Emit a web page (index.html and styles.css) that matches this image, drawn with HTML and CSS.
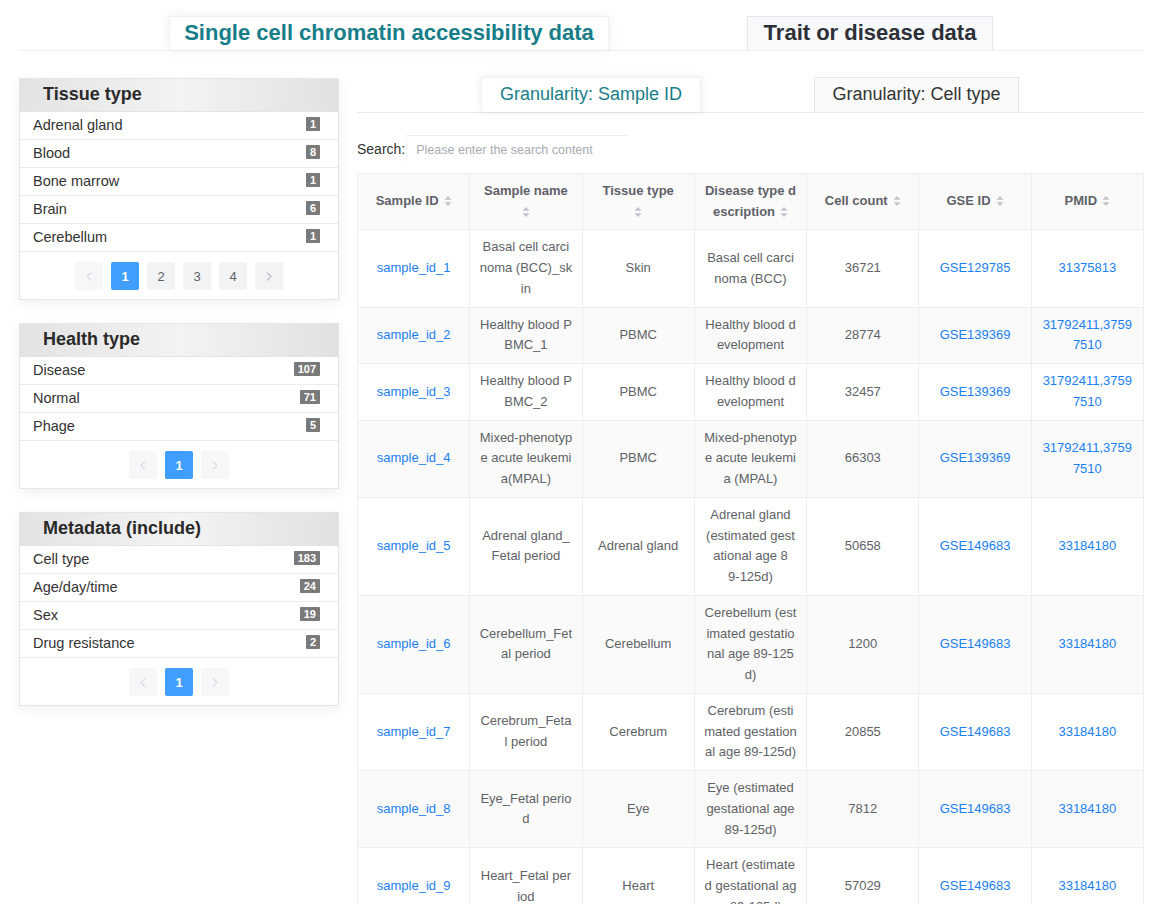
FILE: index.html
```html
<!DOCTYPE html>
<html lang="en">
<head>
<meta charset="utf-8">
<title>Single cell chromatin accessibility data</title>
<link rel="stylesheet" href="styles.css">
</head>
<body>
<div class="page">
  <div class="main-tabs">
    <div class="main-tab main-tab-active">Single cell chromatin accessibility data</div>
    <div class="main-tab main-tab-idle">Trait or disease data</div>
  </div>

  <div class="content">
    <aside class="sidebar">
      <section class="panel">
        <div class="panel-head">Tissue type</div>
        <div class="row"><span>Adrenal gland</span><span class="badge">1</span></div>
        <div class="row"><span>Blood</span><span class="badge">8</span></div>
        <div class="row"><span>Bone marrow</span><span class="badge">1</span></div>
        <div class="row"><span>Brain</span><span class="badge">6</span></div>
        <div class="row"><span>Cerebellum</span><span class="badge">1</span></div>
        <div class="pager">
          <span class="pg pg-nav pg-disabled"><svg width="6" height="9" viewBox="0 0 6 9"><path d="M5 0.5 L1 4.5 L5 8.5" fill="none" stroke="currentColor" stroke-width="1"/></svg></span>
          <span class="pg pg-active">1</span>
          <span class="pg">2</span>
          <span class="pg">3</span>
          <span class="pg">4</span>
          <span class="pg pg-nav"><svg width="6" height="9" viewBox="0 0 6 9"><path d="M1 0.5 L5 4.5 L1 8.5" fill="none" stroke="currentColor" stroke-width="1"/></svg></span>
        </div>
      </section>

      <section class="panel">
        <div class="panel-head">Health type</div>
        <div class="row"><span>Disease</span><span class="badge">107</span></div>
        <div class="row"><span>Normal</span><span class="badge">71</span></div>
        <div class="row"><span>Phage</span><span class="badge">5</span></div>
        <div class="pager">
          <span class="pg pg-nav pg-disabled"><svg width="6" height="9" viewBox="0 0 6 9"><path d="M5 0.5 L1 4.5 L5 8.5" fill="none" stroke="currentColor" stroke-width="1"/></svg></span>
          <span class="pg pg-active">1</span>
          <span class="pg pg-nav pg-disabled"><svg width="6" height="9" viewBox="0 0 6 9"><path d="M1 0.5 L5 4.5 L1 8.5" fill="none" stroke="currentColor" stroke-width="1"/></svg></span>
        </div>
      </section>

      <section class="panel">
        <div class="panel-head">Metadata (include)</div>
        <div class="row"><span>Cell type</span><span class="badge">183</span></div>
        <div class="row"><span>Age/day/time</span><span class="badge">24</span></div>
        <div class="row"><span>Sex</span><span class="badge">19</span></div>
        <div class="row"><span>Drug resistance</span><span class="badge">2</span></div>
        <div class="pager">
          <span class="pg pg-nav pg-disabled"><svg width="6" height="9" viewBox="0 0 6 9"><path d="M5 0.5 L1 4.5 L5 8.5" fill="none" stroke="currentColor" stroke-width="1"/></svg></span>
          <span class="pg pg-active">1</span>
          <span class="pg pg-nav pg-disabled"><svg width="6" height="9" viewBox="0 0 6 9"><path d="M1 0.5 L5 4.5 L1 8.5" fill="none" stroke="currentColor" stroke-width="1"/></svg></span>
        </div>
      </section>
    </aside>

    <main class="right">
      <div class="sub-tabs">
        <div class="sub-tab sub-tab-active">Granularity: Sample ID</div>
        <div class="sub-tab sub-tab-idle">Granularity: Cell type</div>
      </div>

      <div class="search">
        <label for="q">Search:</label>
        <input id="q" class="search-input" type="text" placeholder="Please enter the search content">
      </div>

      <table class="data">
        <thead>
          <tr>
            <th>Sample ID<svg class="sort" width="8" height="12" viewBox="0 0 8 12"><path d="M4 1 L7.5 4.8 L0.5 4.8 Z M0.5 7.2 L7.5 7.2 L4 11 Z"/></svg></th>
            <th>Sample name<br><svg class="sort sort-solo" width="8" height="12" viewBox="0 0 8 12"><path d="M4 1 L7.5 4.8 L0.5 4.8 Z M0.5 7.2 L7.5 7.2 L4 11 Z"/></svg></th>
            <th>Tissue type<br><svg class="sort sort-solo" width="8" height="12" viewBox="0 0 8 12"><path d="M4 1 L7.5 4.8 L0.5 4.8 Z M0.5 7.2 L7.5 7.2 L4 11 Z"/></svg></th>
            <th>Disease type d<br>escription<svg class="sort" width="8" height="12" viewBox="0 0 8 12"><path d="M4 1 L7.5 4.8 L0.5 4.8 Z M0.5 7.2 L7.5 7.2 L4 11 Z"/></svg></th>
            <th>Cell count<svg class="sort" width="8" height="12" viewBox="0 0 8 12"><path d="M4 1 L7.5 4.8 L0.5 4.8 Z M0.5 7.2 L7.5 7.2 L4 11 Z"/></svg></th>
            <th>GSE ID<svg class="sort" width="8" height="12" viewBox="0 0 8 12"><path d="M4 1 L7.5 4.8 L0.5 4.8 Z M0.5 7.2 L7.5 7.2 L4 11 Z"/></svg></th>
            <th>PMID<svg class="sort" width="8" height="12" viewBox="0 0 8 12"><path d="M4 1 L7.5 4.8 L0.5 4.8 Z M0.5 7.2 L7.5 7.2 L4 11 Z"/></svg></th>
          </tr>
        </thead>
        <tbody>
          <tr>
            <td><a href="#">sample_id_1</a></td>
            <td>Basal cell carci<br>noma (BCC)_sk<br>in</td>
            <td>Skin</td>
            <td>Basal cell carci<br>noma (BCC)</td>
            <td>36721</td>
            <td><a href="#">GSE129785</a></td>
            <td><a href="#">31375813</a></td>
          </tr>
          <tr>
            <td><a href="#">sample_id_2</a></td>
            <td>Healthy blood P<br>BMC_1</td>
            <td>PBMC</td>
            <td>Healthy blood d<br>evelopment</td>
            <td>28774</td>
            <td><a href="#">GSE139369</a></td>
            <td><a href="#">31792411,3759<br>7510</a></td>
          </tr>
          <tr>
            <td><a href="#">sample_id_3</a></td>
            <td>Healthy blood P<br>BMC_2</td>
            <td>PBMC</td>
            <td>Healthy blood d<br>evelopment</td>
            <td>32457</td>
            <td><a href="#">GSE139369</a></td>
            <td><a href="#">31792411,3759<br>7510</a></td>
          </tr>
          <tr>
            <td><a href="#">sample_id_4</a></td>
            <td>Mixed-phenotyp<br>e acute leukemi<br>a(MPAL)</td>
            <td>PBMC</td>
            <td>Mixed-phenotyp<br>e acute leukemi<br>a (MPAL)</td>
            <td>66303</td>
            <td><a href="#">GSE139369</a></td>
            <td><a href="#">31792411,3759<br>7510</a></td>
          </tr>
          <tr>
            <td><a href="#">sample_id_5</a></td>
            <td>Adrenal gland_<br>Fetal period</td>
            <td>Adrenal gland</td>
            <td>Adrenal gland<br>(estimated gest<br>ational age 8<br>9-125d)</td>
            <td>50658</td>
            <td><a href="#">GSE149683</a></td>
            <td><a href="#">33184180</a></td>
          </tr>
          <tr>
            <td><a href="#">sample_id_6</a></td>
            <td>Cerebellum_Fet<br>al period</td>
            <td>Cerebellum</td>
            <td>Cerebellum (est<br>imated gestatio<br>nal age 89-125<br>d)</td>
            <td>1200</td>
            <td><a href="#">GSE149683</a></td>
            <td><a href="#">33184180</a></td>
          </tr>
          <tr>
            <td><a href="#">sample_id_7</a></td>
            <td>Cerebrum_Feta<br>l period</td>
            <td>Cerebrum</td>
            <td>Cerebrum (esti<br>mated gestation<br>al age 89-125d)</td>
            <td>20855</td>
            <td><a href="#">GSE149683</a></td>
            <td><a href="#">33184180</a></td>
          </tr>
          <tr>
            <td><a href="#">sample_id_8</a></td>
            <td>Eye_Fetal perio<br>d</td>
            <td>Eye</td>
            <td>Eye (estimated<br>gestational age<br>89-125d)</td>
            <td>7812</td>
            <td><a href="#">GSE149683</a></td>
            <td><a href="#">33184180</a></td>
          </tr>
          <tr>
            <td><a href="#">sample_id_9</a></td>
            <td>Heart_Fetal per<br>iod</td>
            <td>Heart</td>
            <td>Heart (estimate<br>d gestational ag<br>e 89-125d)</td>
            <td>57029</td>
            <td><a href="#">GSE149683</a></td>
            <td><a href="#">33184180</a></td>
          </tr>
        </tbody>
      </table>
    </main>
  </div>
</div>
</body>
</html>
```
FILE: styles.css
```css
html, body {
  margin: 0;
  padding: 0;
  background: #ffffff;
  font-family: "Liberation Sans", Arial, Helvetica, sans-serif;
}

.page {
  width: 1125px;
  margin-left: 19px;
}

/* ---------- top tabs ---------- */
.main-tabs {
  display: flex;
  align-items: flex-end;
  box-sizing: border-box;
  height: 51px;
  padding-left: 150px;
  gap: 138px;
  border-bottom: 1px solid #eef0f4;
}

.main-tab {
  box-sizing: border-box;
  height: 34px;
  line-height: 31px;
  text-align: center;
  font-size: 22px;
  font-weight: bold;
  white-space: nowrap;
}

.main-tab-active {
  width: 440px;
  color: #177e89;
  background: #ffffff;
  border: 1px solid #f0f1f4;
  border-bottom: none;
  box-shadow: 0 0 12px rgba(0, 0, 0, 0.07);
}

.main-tab-idle {
  width: 246px;
  color: #2d3038;
  background: #f8f9fb;
  border: 1px solid #e5e7eb;
  border-bottom: none;
}

/* ---------- layout ---------- */
.content {
  display: flex;
  gap: 18px;
  margin-top: 26px;
  align-items: flex-start;
}

.sidebar {
  width: 320px;
  flex: none;
  display: flex;
  flex-direction: column;
  gap: 23px;
  padding-top: 1px;
}

.right {
  flex: 1;
  min-width: 0;
}

/* ---------- side panels ---------- */
.panel {
  background: #ffffff;
  border: 1px solid #e4e5ea;
  box-shadow: 0 4px 12px rgba(0, 0, 0, 0.06);
}

.panel-head {
  height: 32px;
  line-height: 31px;
  padding-left: 23px;
  font-size: 18px;
  font-weight: bold;
  color: #2a2a2a;
  background: linear-gradient(to right, #e3e3e3 0%, #f3f3f3 50%, #e1e1e1 100%);
  border-bottom: 1px solid #e3e4e8;
}

.row {
  box-sizing: border-box;
  height: 28px;
  display: flex;
  align-items: center;
  justify-content: space-between;
  padding: 0 18px 0 13px;
  border-bottom: 1px solid #ebebee;
  font-size: 14.5px;
  color: #333333;
}

.row span:first-child {
  margin-top: -2px;
}

.badge {
  display: inline-block;
  height: 14px;
  line-height: 14px;
  padding: 0 4px;
  margin-top: -4px;
  background: #7a7a7a;
  color: #ffffff;
  font-size: 11px;
  font-weight: bold;
  border-radius: 1px;
}

.pager {
  display: flex;
  justify-content: center;
  gap: 8px;
  padding: 10px 0 9px;
}

.pg {
  width: 28px;
  height: 28px;
  display: flex;
  align-items: center;
  justify-content: center;
  background: #f2f3f5;
  color: #606266;
  font-size: 13px;
  border-radius: 2px;
}

.pg-active {
  background: #409eff;
  color: #ffffff;
  font-weight: bold;
}

.pg-nav {
  color: #8e9097;
}

.pg-disabled {
  background: #f6f7f9;
  color: #c4c6cc;
}

/* ---------- sub tabs ---------- */
.sub-tabs {
  display: flex;
  align-items: flex-end;
  box-sizing: border-box;
  height: 36px;
  padding-left: 124px;
  gap: 113px;
  border-bottom: 1px solid #e8eaee;
}

.sub-tab {
  box-sizing: border-box;
  height: 35px;
  line-height: 33px;
  text-align: center;
  font-size: 18px;
  white-space: nowrap;
}

.sub-tab-active {
  width: 220px;
  color: #177e89;
  background: #ffffff;
  border: 1px solid #f0f1f4;
  border-bottom: none;
  box-shadow: 0 0 8px rgba(0, 0, 0, 0.08);
}

.sub-tab-idle {
  width: 205px;
  color: #333333;
  background: #fafafa;
  border: 1px solid #e4e6ea;
  border-bottom: none;
}

/* ---------- search ---------- */
.search {
  display: flex;
  align-items: center;
  height: 28px;
  margin-top: 22px;
  font-size: 14px;
  color: #333333;
}

.search-input {
  box-sizing: border-box;
  width: 221px;
  height: 28px;
  margin: 0 0 0 1px;
  padding: 0 9px;
  border: none;
  border-top: 1px solid #eceef2;
  border-left: 1px solid #f4f5f7;
  outline: none;
  font-family: "Liberation Sans", Arial, sans-serif;
  font-size: 12.5px;
  color: #333;
  background: #ffffff;
}

.search-input::placeholder {
  color: #a8abb2;
}

/* ---------- table ---------- */
.data {
  width: 100%;
  margin-top: 10px;
  border-collapse: collapse;
  table-layout: fixed;
  font-size: 13px;
  color: #606266;
}

.data th,
.data td {
  border: 1px solid #ebeef5;
  padding: 7px 0;
  line-height: 20.75px;
  text-align: center;
  vertical-align: middle;
  white-space: nowrap;
}

.data th {
  line-height: 20.7px;
  background: #fafafa;
  font-weight: bold;
  color: #5f6168;
}

.data tbody tr:nth-child(even) td {
  background: #fafafa;
}

.data a {
  color: #1a7ff2;
  text-decoration: none;
}

.sort {
  display: inline-block;
  fill: #c0c4cc;
  vertical-align: -2px;
  margin-left: 5px;
}

.sort-solo {
  margin-left: 0;
}
```
